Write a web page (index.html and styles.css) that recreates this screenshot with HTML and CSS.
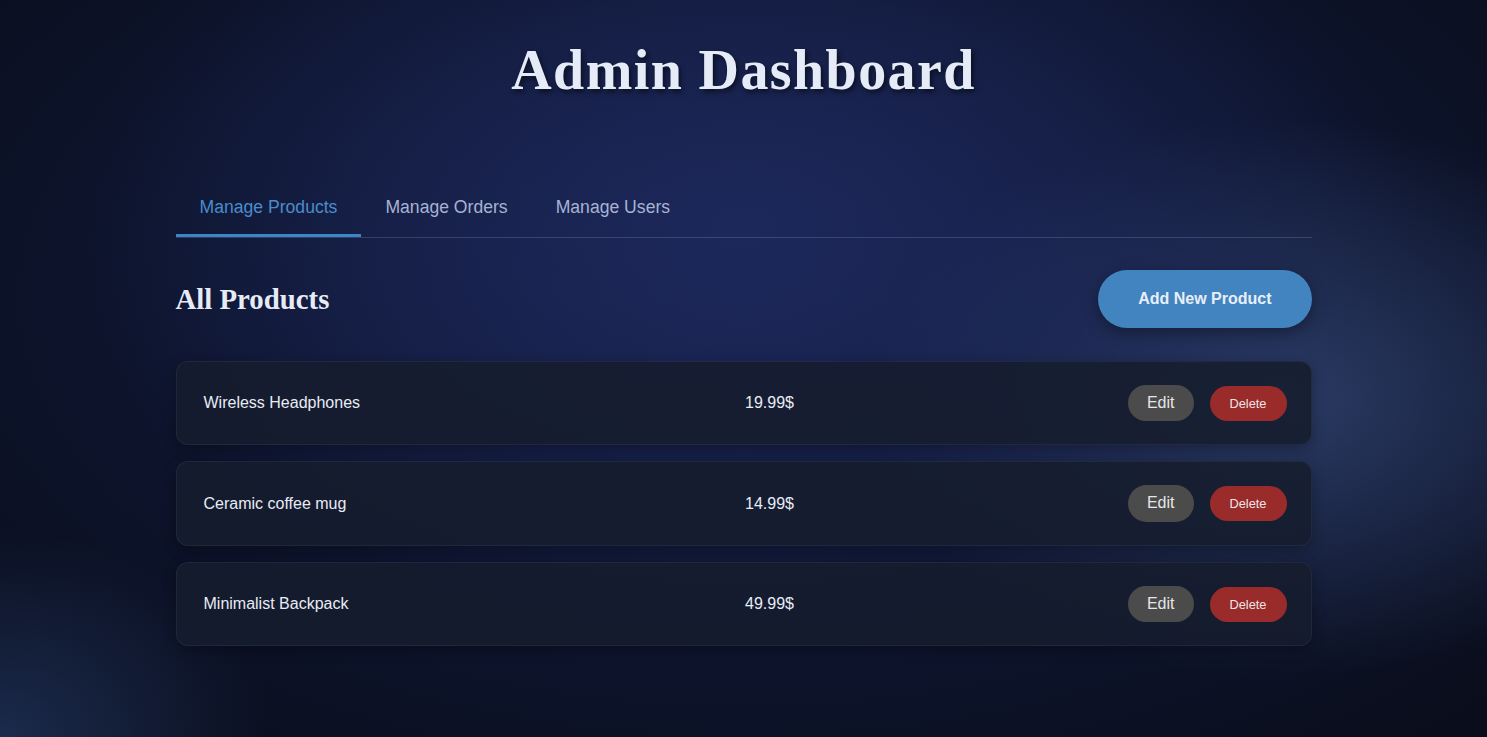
FILE: index.html
```html
<!DOCTYPE html>
<html lang="en">
<head>
<meta charset="utf-8">
<title>Admin Dashboard</title>
<link rel="stylesheet" href="styles.css">
</head>
<body>
  <div class="page">
    <h1 class="title">Admin Dashboard</h1>
    <nav class="tabs">
      <button class="tab active">Manage Products</button>
      <button class="tab">Manage Orders</button>
      <button class="tab">Manage Users</button>
    </nav>
    <div class="section-head">
      <h2 class="section-title">All Products</h2>
      <button class="add-btn">Add New Product</button>
    </div>
    <div class="list">
      <div class="row">
        <span class="name">Wireless Headphones</span>
        <span class="price">19.99$</span>
        <div class="actions"><button class="edit">Edit</button><button class="delete">Delete</button></div>
      </div>
      <div class="row">
        <span class="name">Ceramic coffee mug</span>
        <span class="price">14.99$</span>
        <div class="actions"><button class="edit">Edit</button><button class="delete">Delete</button></div>
      </div>
      <div class="row">
        <span class="name">Minimalist Backpack</span>
        <span class="price">49.99$</span>
        <div class="actions"><button class="edit">Edit</button><button class="delete">Delete</button></div>
      </div>
    </div>
  </div>
</body>
</html>
```
FILE: styles.css
```css
html, body {
  margin: 0;
  padding: 0;
}
body {
  min-height: 100vh;
  font-family: "Liberation Sans", Arial, sans-serif;
  color: #e6ebf5;
  background:
    radial-gradient(ellipse 45% 55% at 50% 30%, rgba(30, 42, 95, 0.85) 0%, rgba(30, 42, 95, 0) 100%),
    radial-gradient(ellipse 28% 38% at 86% 54%, rgba(48, 66, 110, 0.85) 0%, rgba(48, 66, 110, 0) 100%),
    radial-gradient(ellipse 18% 28% at 0% 100%, rgba(30, 48, 85, 0.85) 0%, rgba(30, 48, 85, 0) 100%),
    radial-gradient(ellipse 70% 80% at 50% 40%, #16204a 0%, #0c1228 70%, #0a0e1c 100%);
}
.page {
  width: 1136px;
  margin: 0 auto;
  padding-top: 38px;
  padding-bottom: 60px;
}
.title {
  margin: 0 0 79px;
  text-align: center;
  font-family: "Liberation Serif", "Times New Roman", serif;
  font-weight: bold;
  font-size: 56px;
  line-height: 64px;
  letter-spacing: 1.4px;
  color: #e6ecf7;
  text-shadow: 2px 3px 5px rgba(0, 0, 0, 0.55);
}
.tabs {
  display: flex;
  border-bottom: 1px solid rgba(120, 140, 190, 0.3);
}
.tab {
  background: none;
  border: none;
  border-bottom: 3px solid transparent;
  padding: 16px 24px 17px;
  font-family: "Liberation Sans", Arial, sans-serif;
  font-size: 17.6px;
  line-height: 20px;
  color: #a6b3d3;
  cursor: pointer;
}
.tab.active {
  color: #4a8ccb;
  border-bottom-color: #3c86c6;
}
.section-head {
  display: flex;
  justify-content: space-between;
  align-items: center;
  margin-top: 32px;
  margin-bottom: 33px;
}
.section-title {
  margin: 0;
  font-family: "Liberation Serif", "Times New Roman", serif;
  font-weight: bold;
  font-size: 28.8px;
  color: #e6ebf5;
}
.add-btn {
  background: #4284bf;
  color: #e8eef8;
  border: none;
  border-radius: 30px;
  padding: 20px 40px;
  font-family: "Liberation Sans", Arial, sans-serif;
  font-weight: bold;
  font-size: 16px;
  line-height: 18px;
  box-shadow: 0 5px 15px rgba(0, 0, 0, 0.35);
  cursor: pointer;
}
.list {
  display: flex;
  flex-direction: column;
  gap: 16px;
}
.row {
  display: grid;
  grid-template-columns: 2fr 1fr 1fr;
  align-items: center;
  padding: 23px 24px 23px 27px;
  background: rgba(22, 28, 46, 0.88);
  border: 1px solid rgba(60, 72, 100, 0.28);
  border-radius: 12px;
  box-shadow: 0 4px 14px rgba(0, 0, 0, 0.3);
  font-size: 16px;
  color: #e8ecf5;
}
.actions {
  display: flex;
  justify-content: flex-end;
  align-items: center;
  gap: 16px;
}
.edit {
  background: #4b4b4b;
  color: #e6e6e6;
  border: none;
  border-radius: 20px;
  padding: 9px 19px;
  font-family: "Liberation Sans", Arial, sans-serif;
  font-size: 16px;
  line-height: 18.4px;
  cursor: pointer;
}
.delete {
  background: #9a2b2b;
  color: #f0e6e6;
  border: none;
  border-radius: 20px;
  padding: 10px 20px;
  font-family: "Liberation Sans", Arial, sans-serif;
  font-size: 12.8px;
  line-height: 15px;
  cursor: pointer;
}
```
